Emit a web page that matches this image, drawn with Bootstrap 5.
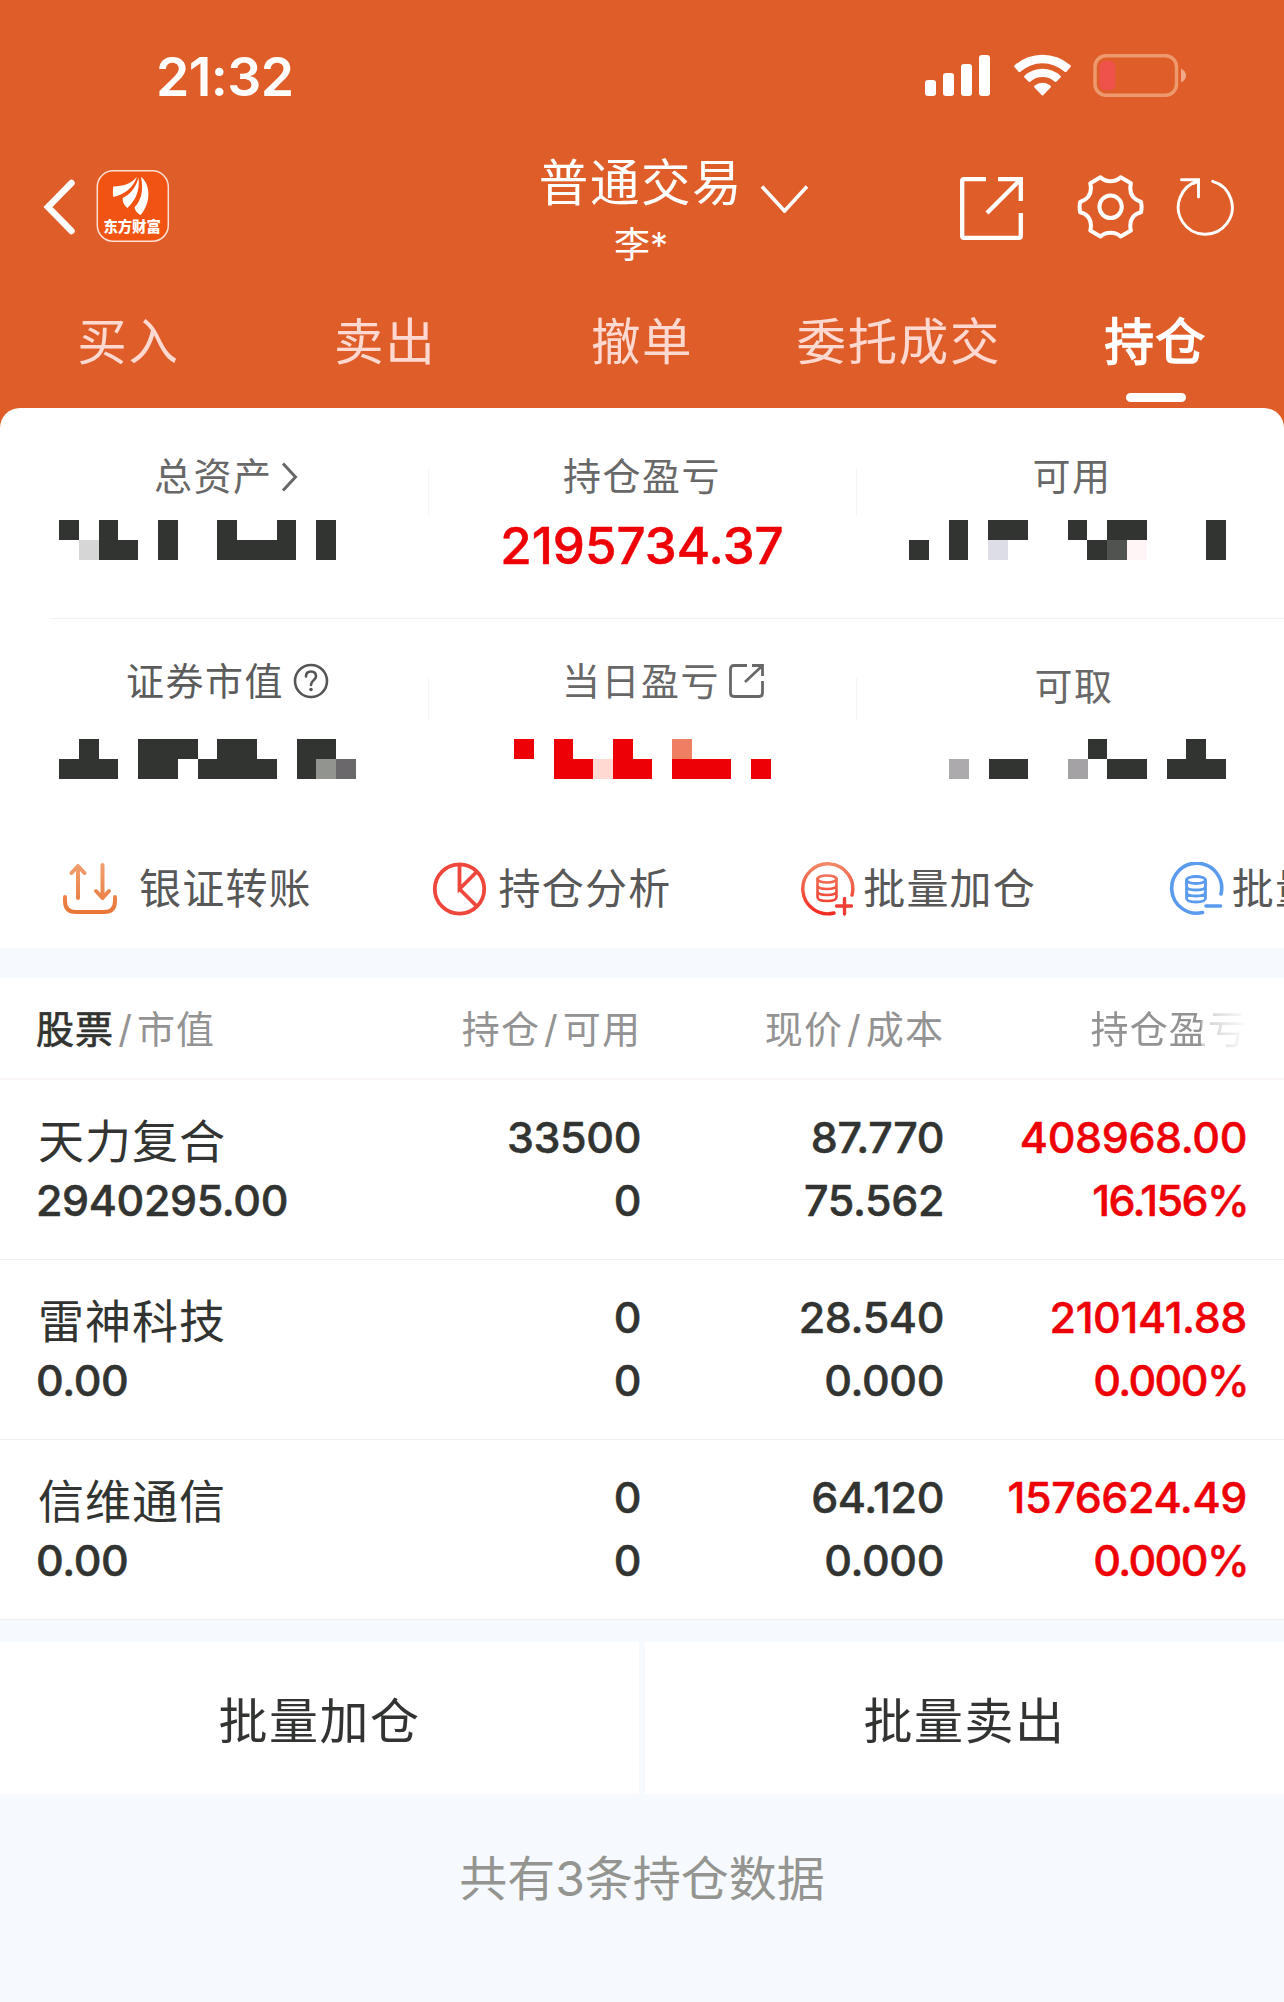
<!DOCTYPE html>
<html lang="zh-CN">
<head>
<meta charset="utf-8">
<meta name="viewport" content="width=device-width, initial-scale=1">
<title>普通交易 - 持仓</title>
<link rel="stylesheet" href="https://cdn.jsdelivr.net/npm/bootstrap@5.3.0/dist/css/bootstrap.min.css">
<style>
  :root { --ink:#323431; --orange:#df5d29; --soft:#f6faff; --up:#ee0007; --rule:#f3f4f5; }
  body { font-family:Inter,"Noto Sans CJK SC",sans-serif; background:var(--soft); color:var(--ink); width:1284px; height:2002px; overflow:hidden; }
  svg { display:block; flex:none; }
  .hero { background:var(--orange); height:430px; color:#fff; }
  .statusbar { height:108px; padding:45px 95px 0 156px; }
  .clock { font-size:53.5px; font-weight:600; line-height:63px; letter-spacing:-.6px; }
  .topnav { height:182px; padding:0 45px 0 43px; }
  .side { width:320px; padding-top:62px; }
  .mid { padding-top:45px; }
  .ttl { font-size:49.5px; line-height:60px; letter-spacing:1.6px; }
  .who { font-size:36px; line-height:40px; margin-top:12px; }
  .tabs { height:118px; }
  .tabs .nav-link { color:#ffd9d1; font-size:49.5px; letter-spacing:1.6px; line-height:60px; padding:22px 0 0; position:relative; white-space:nowrap; flex:0 0 20%; text-align:center; }
  .tabs .nav-link.active { color:#fff; -webkit-text-stroke:1.6px #fff; }
  .tabs .nav-link.active::after { content:""; position:absolute; left:99px; top:103px; width:60px; height:9px; border-radius:4.5px; background:#fff; }
  .sheet { margin-top:-22px; background:#fff; border-radius:20px 20px 0 0; height:540px; }
  .stats { height:210px; }
  .stats > div { width:428px; position:relative; }
  .stats > div + div::before { content:""; position:absolute; left:0; top:15px; width:1px; height:48px; background:var(--rule); }
  .stats.second > div + div::before { top:20px; height:42px; }
  .lbl { font-size:38px; letter-spacing:1.5px; line-height:46px; color:#686868; white-space:nowrap; }
  .rule { height:1px; margin-left:50px; background:#eff0f1; }
  .s1 { padding-top:45px; } .s2 { padding-top:39px; }
  .big { font-size:51px; line-height:60px; font-weight:500; color:var(--up); margin-top:17px; -webkit-text-stroke:.5px var(--up); }
  .quick { height:87px; margin-top:33px; padding-left:62px; overflow:hidden; }
  .quick > div { flex:0 0 368.6px; height:54px; white-space:nowrap; }
  .quick span { font-size:42px; letter-spacing:1.2px; line-height:54px; color:#585858; }
  .thead-line { margin-top:30px; height:102px; background:#fff; border-bottom:2px solid #f8f4f5; color:#939393; font-size:38px; letter-spacing:1.1px; padding-top:28px; }
  .thead-line > div { line-height:46px; white-space:nowrap; }
  .on { color:#323431; -webkit-text-stroke:.7px #323431; }
  .c1 { width:340px; padding-left:36px; } .c2 { width:301px; text-align:right; } .c3 { width:303px; text-align:right; } .c4 { width:303px; text-align:right; }
  .fade-end { -webkit-mask-image:linear-gradient(90deg,#000 0 257px,rgba(0,0,0,.45) 258px,rgba(0,0,0,.02) 303px); mask-image:linear-gradient(90deg,#000 0 257px,rgba(0,0,0,.45) 258px,rgba(0,0,0,.02) 303px); }
  .stock { height:180px; background:#fff; border-bottom:1px solid #eff0f1; padding-top:26px; font-size:43px; font-weight:500; line-height:63px; letter-spacing:-.4px; -webkit-text-stroke:.5px currentColor; }
  .stock .nm { font-size:46px; font-weight:400; letter-spacing:1px; line-height:70px; height:63px; padding-left:2px; -webkit-text-stroke:0; }
  .pct { letter-spacing:-1.6px; margin-right:-1px; }
  .up { color:var(--up); }
  .acts { margin-top:22px; gap:6px; height:152px; }
  .acts .btn { background:#fff; border:0; border-radius:0; flex:1; font-size:49px; letter-spacing:1.5px; color:var(--ink); padding:7px 0 0; line-height:60px; }
  .foot { margin-top:55px; font-size:48px; line-height:60px; color:#949591; }
</style>
<script src="https://cdn.jsdelivr.net/npm/bootstrap@5.3.0/dist/js/bootstrap.bundle.min.js"></script>
</head>
<body>
<header class="hero">
  <div class="statusbar d-flex justify-content-between">
    <div class="clock">21:32</div>
    <div class="d-flex">
      <svg width="66" height="43" viewBox="0 0 66 43" fill="#fff" style="margin-top:9px"><rect y="26" width="11" height="16" rx="3"/><rect x="18" y="19" width="11" height="23" rx="3"/><rect x="36" y="10" width="11" height="32" rx="3"/><rect x="54" y="1" width="11" height="41" rx="3"/></svg>
      <svg width="58" height="43" viewBox="0 0 58 43" style="margin:9px 0 0 23px" fill="#fff"><path d="M0 12.6Q.3 11.6 1.2 10.8A42 42 0 0 1 55.8 10.8Q56.700 11.600 57 12.600L52.200 18Q51.200 18.400 50.300 17.500A33 33 0 0 0 6.700 17.500Q5.800 18.400 4.800 18Z"/><path d="M10 23Q10 22.200 10.800 21.400A27 27 0 0 1 46.200 21.400Q47 22.200 47 23L42 28Q41.300 28.200 40.500 27.500A18.500 18.500 0 0 0 16.500 27.500Q15.700 28.200 15 28Z"/><path d="M20 33Q20 32.200 20.700 31.600A12.500 12.500 0 0 1 36.300 31.600Q37 32.200 37 33L29.200 41.200Q28.500 42 27.800 41.200Z"/></svg>
      <svg width="96" height="45" viewBox="0 0 96 45" style="margin:9px 0 0 21px"><rect x="2" y="1.800" width="81.500" height="39.500" rx="11" fill="none" stroke="#ee996d" stroke-width="3.500"/><rect x="6.500" y="7" width="16" height="29" rx="5.500" fill="#ef524b"/><path d="M88 14.500Q93 17 93 21.500T88 28.500Z" fill="#f0a888"/></svg>
    </div>
  </div>
  <div class="topnav d-flex justify-content-between">
    <div class="side d-flex">
      <svg width="34" height="74" viewBox="0 0 34 74" fill="none" stroke="#fff" stroke-width="6.500" stroke-linecap="round"><path d="M28.500 13L5 37L28.500 61"/></svg>
      <svg width="74" height="74" viewBox="0 0 74 74" style="margin-left:19px"><rect x="1.300" y=".8" width="71" height="70.500" rx="16" fill="#f15312" stroke="#fbe0d5" stroke-width="1.500"/><g fill="#fff"><path d="M41 6.700C37 18 29 24 17.500 27C16.500 23 17 18 17.300 16.500C27 16 35 14 41 6.700Z"/><path d="M42.500 7.500C44 20 40 30 31.300 38C27.500 35 26.500 31 26.700 28C35 24 40 17 42.500 7.500Z"/><path d="M45 6.700C54 14 56 31 44.700 45C40.500 43 38.500 39.500 38.700 37C44.500 31 48 22 45 6.700Z"/></g><text x="7.500" y="62" font-size="14.300" font-weight="900" fill="#fff" font-family="Noto Sans CJK SC">东方财富</text></svg>
    </div>
    <div class="mid text-center">
      <div class="d-flex justify-content-center">
        <div style="width:66px"></div>
        <div class="ttl">普通交易</div>
        <svg width="66" height="60" viewBox="0 0 66 60" fill="none" stroke="#fff" stroke-width="3.600"><path d="M19 33.500L41.500 58L64 33.500"/></svg>
      </div>
      <div class="who">李*</div>
    </div>
    <div class="side d-flex justify-content-end">
      <svg width="64" height="74" viewBox="0 -7 64 74" fill="none" stroke="#fff" stroke-width="4.300"><path d="M26 2.200H4Q2.200 2.200 2.200 4V59Q2.200 60.800 4 60.800H59Q60.800 60.800 60.800 59V36M38 2.200H60.800V24M60 3L27 36"/></svg>
      <svg width="68" height="74" viewBox="0 -4 68 74" style="margin-left:53px" fill="none" stroke="#fff" stroke-width="4" stroke-linejoin="round"><path d="M23.500 3.200L13.300 9.300C15.500 19 12 25 3.200 28Q2 33 3.200 38.200C12 40.500 15.500 47 13.300 56.500L23.500 62.500C29 57.500 38.200 57.500 43.700 62.500L53.900 56.500C51.700 47 55.200 40.500 64 38.200Q65.200 33 64 28C55.200 25 51.700 19 53.900 9.300L43.700 3.200C38.200 8.500 29 8.500 23.500 3.200Z"/><circle cx="33.600" cy="32.800" r="11.200"/></svg>
      <svg width="64" height="74" viewBox="0 -4 64 74" style="margin-left:30px" fill="none" stroke="#fff" stroke-width="2.900" stroke-linecap="round"><path d="M37.700 7.300A27 27 0 1 1 24 7L18.500 9.500M6.500 5.800H23.500V23"/></svg>
    </div>
  </div>
  <nav class="tabs nav flex-nowrap">
    <a class="nav-link">买入</a><a class="nav-link">卖出</a><a class="nav-link">撤单</a><a class="nav-link">委托成交</a><a class="nav-link active">持仓</a>
  </nav>
</header>

<section class="sheet">
  <div class="stats d-flex s1">
    <div>
      <div class="lbl d-flex" style="padding-left:154px">总资产<svg width="20" height="46" viewBox="0 0 20 46" style="margin-left:7px" fill="none" stroke="#686868" stroke-width="3"><path d="M3 10.500L15.500 24L3 37.500"/></svg></div>
      <svg width="277" height="40" viewBox="0 0 14 2" preserveAspectRatio="none" shape-rendering="crispEdges" style="margin:21px 0 0 59px" fill="#323431"><path d="M0 0h1v1H0zM2 0h1v1h1v1H2zM5 0h1v2H5zM8 0h1v1h2V0h1v2H8zM13 0h1v2h-1z"/><path fill="#d6d6d6" d="M1 1h1v1H1z"/></svg>
    </div>
    <div class="text-center"><div class="lbl">持仓盈亏</div><div class="big">2195734.37</div></div>
    <div>
      <div class="lbl text-center ps-1">可用</div>
      <svg width="317" height="40" viewBox="0 0 16 2" preserveAspectRatio="none" shape-rendering="crispEdges" style="margin:21px 0 0 53px" fill="#323431"><path d="M0 1h1v1H0zM2 0h1v2H2zM4 0h2v1H4zM8 0h1v1H8zM9 1h1V0h2v1h-2v1H9zM15 0h1v2h-1z"/><path fill="#dddde8" d="M4 1h1v1H4z"/><path fill="#50534f" d="M10 1h1v1h-1z"/><path fill="#fff5f6" d="M11 1h1v1h-1z"/></svg>
    </div>
  </div>
  <div class="rule"></div>
  <div class="stats second d-flex s2">
    <div>
      <div class="lbl d-flex" style="padding-left:126px;color:#5c5c5c">证券市值<svg width="38" height="46" viewBox="0 0 36 46" style="margin-left:8px" fill="none" stroke="#555" stroke-width="2.600"><circle cx="18" cy="23" r="16"/><path d="M13 18.500Q13 13.500 18 13.500T23 18.500C23 21.500 18 22.500 18 27" stroke-linecap="round"/><circle cx="18" cy="31.500" r="1.800" fill="#555" stroke="none"/></svg></div>
      <svg width="297" height="40" viewBox="0 0 15 2" preserveAspectRatio="none" shape-rendering="crispEdges" style="margin:35px 0 0 59px" fill="#323431"><path d="M1 0h1v1h1v1H0V1h1zM4 0h3v1H6v1H4zM8 0h2v1h1v1H7V1h1zM12 0h2v1h-1v1h-1z"/><path fill="#929490" d="M13 1h1v1h-1z"/><path fill="#6a686b" d="M14 1h1v1h-1z"/></svg>
    </div>
    <div>
      <div class="lbl d-flex" style="padding-left:134px">当日盈亏<svg width="36" height="46" viewBox="0 0 36 46" style="margin-left:8px" fill="none" stroke="#686868" stroke-width="2.800"><path d="M19 7.500H6Q2.500 7.500 2.500 11V35Q2.500 38.500 6 38.500H31Q34.500 38.500 34.500 35V23M24 7.500H34.500V18M34 8L17 24"/></svg></div>
      <svg width="257" height="40" viewBox="0 0 13 2" preserveAspectRatio="none" shape-rendering="crispEdges" style="margin:35px 0 0 86px" fill="#ee0007"><path d="M0 0h1v1H0zM2 0h1v1h1v1H2zM5 0h1v1h1v1H5zM8 1h3v1H8zM12 1h1v1h-1z"/><path fill="#ffd9d2" d="M4 1h1v1H4z"/><path fill="#ef7f63" d="M8 0h1v1H8z"/></svg>
    </div>
    <div>
      <div class="lbl text-center" style="padding:5px 0 0 8px">可取</div>
      <svg width="277" height="40" viewBox="2 0 14 2" preserveAspectRatio="none" shape-rendering="crispEdges" style="margin:30px 0 0 93px" fill="#323431"><path d="M4 1h2v1H4zM9 0h1v1H9zM10 1h2v1h-2zM14 0h1v1h1v1h-3V1h1z"/><path fill="#acaaad" d="M2 1h1v1H2z"/><path fill="#a4a2a5" d="M8 1h1v1H8z"/></svg>
    </div>
  </div>
  <svg width="0" height="0" class="position-absolute"><defs>
    <linearGradient id="gr" x1="0" y1="0" x2="0" y2="54" gradientUnits="userSpaceOnUse"><stop stop-color="#f28a68"/><stop offset="1" stop-color="#f0281f"/></linearGradient>
    <linearGradient id="go" x1="0" y1="0" x2="0" y2="54" gradientUnits="userSpaceOnUse"><stop stop-color="#f2a071"/><stop offset="1" stop-color="#e87434"/></linearGradient>
  </defs></svg>
  <div class="quick d-flex">
    <div class="d-flex"><svg width="56" height="54" viewBox="0 0 56 54" fill="none" stroke="url(#go)" stroke-width="4" stroke-linecap="round" stroke-linejoin="round"><path d="M16 36V4M9.500 11L16 4L22.500 11M40.500 3V36M34 29L40.500 36L47 29M3 35V39Q3 50 14 50H42Q53 50 53 39V35"/></svg><span style="margin-left:21px">银证转账</span></div>
    <div class="d-flex"><svg width="56" height="54" viewBox="0 0 56 54" fill="none" stroke="#ef473c" stroke-width="3.800"><circle cx="28.500" cy="27" r="24.700"/><path d="M28.500 3V27L46 9.500M28.500 27L46 44.500"/></svg><span style="margin-left:12px">持仓分析</span></div>
    <div class="d-flex"><svg width="56" height="54" viewBox="0 0 56 54" fill="none" stroke="url(#gr)" stroke-width="3.400" stroke-linecap="round"><path d="M53 33A25 25 0 1 0 35 51"/><g stroke-width="2.600"><ellipse cx="28" cy="17" rx="9.500" ry="3.500"/><path d="M18.500 17V35Q18.500 39 28 39T37.500 35V17M18.500 23Q18.500 27 28 27T37.500 23M18.500 29Q18.500 33 28 33T37.500 29"/></g><path stroke="#ef3d35" d="M37.500 44H52.500M45.500 36.500V52"/></svg><span style="margin-left:8px">批量加仓</span></div>
    <div class="d-flex"><svg width="56" height="54" viewBox="0 0 56 54" fill="none" stroke="#5b9bee" stroke-width="3.600" stroke-linecap="round"><path d="M53 32A25 25 0 1 0 34.500 50.500"/><g stroke-width="2.800"><ellipse cx="28" cy="18" rx="9.500" ry="3.500"/><path d="M18.500 18V36Q18.500 40 28 40T37.500 36V18M18.500 24Q18.500 28 28 28T37.500 24M18.500 30Q18.500 34 28 34T37.500 30"/></g><path d="M38 44H52.500"/></svg><span style="margin-left:8px">批量卖出</span></div>
  </div>
</section>

<section>
  <div class="thead-line d-flex">
    <div class="c1"><span class="on">股票</span><span class="px-1">/</span>市值</div>
    <div class="c2">持仓<span class="px-1">/</span>可用</div><div class="c3">现价<span class="px-1">/</span>成本</div><div class="c4 fade-end">持仓盈亏</div>
  </div>
  <div class="stock d-flex"><div class="c1"><div class="nm">天力复合</div>2940295.00</div><div class="c2">33500<br>0</div><div class="c3">87.770<br>75.562</div><div class="c4 up">408968.00<div class="pct">16.156%</div></div></div>
  <div class="stock d-flex"><div class="c1"><div class="nm">雷神科技</div>0.00</div><div class="c2">0<br>0</div><div class="c3">28.540<br>0.000</div><div class="c4 up">210141.88<div class="pct">0.000%</div></div></div>
  <div class="stock d-flex"><div class="c1"><div class="nm">信维通信</div>0.00</div><div class="c2">0<br>0</div><div class="c3">64.120<br>0.000</div><div class="c4 up">1576624.49<div class="pct">0.000%</div></div></div>
</section>
<div class="acts d-flex"><button class="btn">批量加仓</button><button class="btn">批量卖出</button></div>
<div class="foot text-center">共有3条持仓数据</div>
</body>
</html>
